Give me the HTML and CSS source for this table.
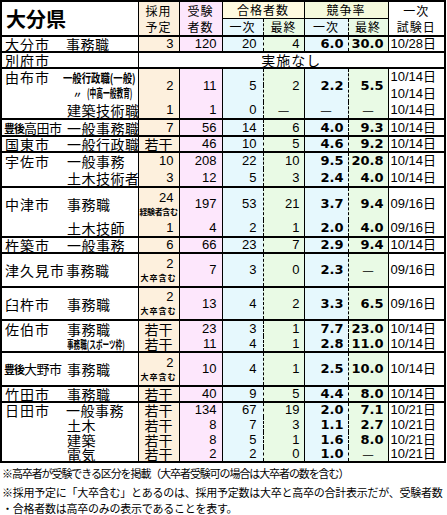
FILE: index.html
```html
<!DOCTYPE html>
<html lang="ja">
<head>
<meta charset="utf-8">
<title>大分県</title>
<link rel="stylesheet" href="styles.css">
</head>
<body>
<table class="tbl">
<colgroup>
<col class="w-city"><col class="w-job"><col class="w-plan"><col class="w-app"><col class="w-p1"><col class="w-pf"><col class="w-r1"><col class="w-rf"><col class="w-date">
</colgroup>
<thead>
<tr class="hr1">
<th colspan="2" rowspan="2" class="pref">大分県</th>
<th rowspan="2" class="c-plan hd"><span class="ln">採用</span><span class="ln">予定</span></th>
<th rowspan="2" class="c-app hd"><span class="ln">受験</span><span class="ln">者数</span></th>
<th colspan="2" class="c-p1 hd hd-pass">合格者数</th>
<th colspan="2" class="c-r1 hd hd-ratio">競争率</th>
<th rowspan="2" class="c-date hd"><span class="ln">一次</span><span class="ln">試験日</span></th>
</tr>
<tr class="hr2">
<th class="c-p1 hd">一次</th><th class="c-pf hd">最終</th><th class="c-r1 hd">一次</th><th class="c-rf hd">最終</th>
</tr>
</thead>

<tbody class="grp">
<tr class="h15">
<td class="city">大分市</td><td class="job j-tight">事務職</td><td class="c-plan num">3</td><td class="c-app num">120</td><td class="c-p1 num">20</td><td class="c-pf num">4</td><td class="c-r1 rt">6.0</td><td class="c-rf rt">30.0</td><td class="c-date dt">10/28日</td>
</tr>
</tbody>

<tbody class="grp">
<tr class="h16">
<td class="city">別府市</td><td class="job"></td><td colspan="7" class="none">実施なし</td>
</tr>
</tbody>

<tbody class="grp">
<tr class="h17">
<td class="city">由布市</td><td class="job"><span class="sq sq-a">一般行政職(一般)</span></td><td rowspan="2" class="c-plan num">2</td><td rowspan="2" class="c-app num">11</td><td rowspan="2" class="c-p1 num">5</td><td rowspan="2" class="c-pf num">2</td><td rowspan="2" class="c-r1 rt">2.2</td><td rowspan="2" class="c-rf rt">5.5</td><td class="c-date dt">10/14日</td>
</tr>
<tr class="h16">
<td class="city"></td><td class="job"><span class="ditto">〃</span><span class="sq sq-b">(中高一般教育)</span></td><td class="c-date dt">10/14日</td>
</tr>
<tr class="h17">
<td class="city"></td><td class="job j-in">建築技術職</td><td class="c-plan num">1</td><td class="c-app num">1</td><td class="c-p1 num">0</td><td class="c-pf dash">—</td><td class="c-r1 dash">—</td><td class="c-rf dash">—</td><td class="c-date dt">10/14日</td>
</tr>
</tbody>

<tbody class="grp">
<tr class="h17">
<td class="city city-sm"><span class="small-pre">豊後</span>高田市</td><td class="job j-in">一般事務職</td><td class="c-plan num">7</td><td class="c-app num">56</td><td class="c-p1 num">14</td><td class="c-pf num">6</td><td class="c-r1 rt">4.0</td><td class="c-rf rt">9.3</td><td class="c-date dt">10/14日</td>
</tr>
</tbody>

<tbody class="grp">
<tr class="h16">
<td class="city">国東市</td><td class="job j-in">一般行政職</td><td class="c-plan ctr">若干</td><td class="c-app num">46</td><td class="c-p1 num">10</td><td class="c-pf num">5</td><td class="c-r1 rt">4.6</td><td class="c-rf rt">9.2</td><td class="c-date dt">10/14日</td>
</tr>
</tbody>

<tbody class="grp">
<tr class="h17">
<td class="city">宇佐市</td><td class="job j-in">一般事務</td><td class="c-plan num">10</td><td class="c-app num">208</td><td class="c-p1 num">22</td><td class="c-pf num">10</td><td class="c-r1 rt">9.5</td><td class="c-rf rt">20.8</td><td class="c-date dt">10/14日</td>
</tr>
<tr class="h18">
<td class="city"></td><td class="job j-in">土木技術者</td><td class="c-plan num">3</td><td class="c-app num">12</td><td class="c-p1 num">5</td><td class="c-pf num">3</td><td class="c-r1 rt">2.4</td><td class="c-rf rt">4.0</td><td class="c-date dt">10/14日</td>
</tr>
</tbody>

<tbody class="grp">
<tr class="h33">
<td class="city">中津市</td><td class="job j-in">事務職</td><td class="c-plan two"><span class="two-num">24</span><span class="two-note">経験者含む</span></td><td class="c-app num">197</td><td class="c-p1 num">53</td><td class="c-pf num">21</td><td class="c-r1 rt">3.7</td><td class="c-rf rt">9.4</td><td class="c-date dt">09/16日</td>
</tr>
<tr class="h17">
<td class="city"></td><td class="job j-in">土木技師</td><td class="c-plan num">1</td><td class="c-app num">4</td><td class="c-p1 num">2</td><td class="c-pf num">1</td><td class="c-r1 rt">2.0</td><td class="c-rf rt">4.0</td><td class="c-date dt">09/16日</td>
</tr>
</tbody>

<tbody class="grp">
<tr class="h16">
<td class="city">杵築市</td><td class="job j-in">一般事務</td><td class="c-plan num">6</td><td class="c-app num">66</td><td class="c-p1 num">23</td><td class="c-pf num">7</td><td class="c-r1 rt">2.9</td><td class="c-rf rt">9.4</td><td class="c-date dt">10/14日</td>
</tr>
</tbody>

<tbody class="grp">
<tr class="h34">
<td class="city">津久見市</td><td class="job j-tight">事務職</td><td class="c-plan two"><span class="two-num">2</span><span class="two-note wide">大卒含む</span></td><td class="c-app num">7</td><td class="c-p1 num">3</td><td class="c-pf num">0</td><td class="c-r1 rt">2.3</td><td class="c-rf dash">—</td><td class="c-date dt">09/16日</td>
</tr>
</tbody>

<tbody class="grp">
<tr class="h33">
<td class="city">臼杵市</td><td class="job j-in">事務職</td><td class="c-plan two"><span class="two-num">2</span><span class="two-note wide">大卒含む</span></td><td class="c-app num">13</td><td class="c-p1 num">4</td><td class="c-pf num">2</td><td class="c-r1 rt">3.3</td><td class="c-rf rt">6.5</td><td class="c-date dt">09/16日</td>
</tr>
</tbody>

<tbody class="grp">
<tr class="h16">
<td class="city">佐伯市</td><td class="job j-in">事務職</td><td class="c-plan ctr">若干</td><td class="c-app num">23</td><td class="c-p1 num">3</td><td class="c-pf num">1</td><td class="c-r1 rt">7.7</td><td class="c-rf rt">23.0</td><td class="c-date dt">10/14日</td>
</tr>
<tr class="h16">
<td class="city"></td><td class="job j-in"><span class="sq sq-c">事務職(スポーツ枠)</span></td><td class="c-plan ctr">若干</td><td class="c-app num">11</td><td class="c-p1 num">4</td><td class="c-pf num">1</td><td class="c-r1 rt">2.8</td><td class="c-rf rt">11.0</td><td class="c-date dt">10/14日</td>
</tr>
</tbody>

<tbody class="grp">
<tr class="h34">
<td class="city city-sm"><span class="small-pre">豊後</span>大野市</td><td class="job j-in">事務職</td><td class="c-plan two"><span class="two-num">2</span><span class="two-note wide">大卒含む</span></td><td class="c-app num">10</td><td class="c-p1 num">4</td><td class="c-pf num">1</td><td class="c-r1 rt">2.5</td><td class="c-rf rt">10.0</td><td class="c-date dt">10/14日</td>
</tr>
</tbody>

<tbody class="grp">
<tr class="h16">
<td class="city">竹田市</td><td class="job j-in">事務職</td><td class="c-plan ctr">若干</td><td class="c-app num">40</td><td class="c-p1 num">9</td><td class="c-pf num">5</td><td class="c-r1 rt">4.4</td><td class="c-rf rt">8.0</td><td class="c-date dt">10/14日</td>
</tr>
</tbody>

<tbody class="grp">
<tr class="h15">
<td class="city">日田市</td><td class="job j-tight">一般事務</td><td class="c-plan ctr">若干</td><td class="c-app num">134</td><td class="c-p1 num">67</td><td class="c-pf num">19</td><td class="c-r1 rt">2.0</td><td class="c-rf rt">7.1</td><td class="c-date dt">10/21日</td>
</tr>
<tr class="h15">
<td class="city"></td><td class="job j-in">土木</td><td class="c-plan ctr">若干</td><td class="c-app num">8</td><td class="c-p1 num">7</td><td class="c-pf num">3</td><td class="c-r1 rt">1.1</td><td class="c-rf rt">2.7</td><td class="c-date dt">10/21日</td>
</tr>
<tr class="h15">
<td class="city"></td><td class="job j-in">建築</td><td class="c-plan ctr">若干</td><td class="c-app num">8</td><td class="c-p1 num">5</td><td class="c-pf num">1</td><td class="c-r1 rt">1.6</td><td class="c-rf rt">8.0</td><td class="c-date dt">10/21日</td>
</tr>
<tr class="h15">
<td class="city"></td><td class="job j-in">電気</td><td class="c-plan ctr">若干</td><td class="c-app num">2</td><td class="c-p1 num">2</td><td class="c-pf num">0</td><td class="c-r1 rt">1.0</td><td class="c-rf dash">—</td><td class="c-date dt">10/21日</td>
</tr>
</tbody>
</table>

<div class="notes">
<p class="note n1">※高卒者が受験できる区分を掲載（大卒者受験可の場合は大卒者の数を含む）</p>
<p class="note n2"><span class="nl">※採用予定に「大卒含む」とあるのは、採用予定数は大卒と高卒の合計表示だが、受験者数</span><span class="nl">・合格者数は高卒のみの表示であることを表す。</span></p>
</div>
</body>
</html>
```

FILE: styles.css
```css
html, body {
  margin: 0;
  padding: 0;
  background: #ffffff;
}
body {
  width: 447px;
  font-family: "Noto Sans CJK JP", sans-serif;
  color: #000;
}

.tbl {
  border-collapse: collapse;
  table-layout: fixed;
  width: 446px;
  border: 2px solid #000;
}
.w-city { width: 65px; }
.w-job { width: 72px; }
.w-plan { width: 41px; }
.w-app { width: 43px; }
.w-p1 { width: 41px; }
.w-pf { width: 41px; }
.w-r1 { width: 44px; }
.w-rf { width: 40px; }
.w-date { width: 57px; }

.tbl th, .tbl td {
  padding: 0;
  font-weight: normal;
  font-size: 13px;
  line-height: 14px;
  white-space: nowrap;
  vertical-align: middle;
}

/* column colours and rules */
.c-plan { background: #fdf0dd; border-left: 1px solid #000; }
.c-app { background: #fde7fc; border-left: 1px solid #000; }
.c-p1 { background: #e6f8fd; border-left: 1px solid #000; }
.c-pf { background: #e9fae5; border-left: 1px dashed #000; }
.c-r1 { background: #e6f8fd; border-left: 1px solid #000; }
.c-rf { background: #e9fae5; border-left: 1px dashed #000; }
.c-date { background: #ffffff; border-left: 1px solid #000; }

/* header */
.hr1 { height: 17px; }
.hr2 { height: 17px; }
.tbl th.pref {
  text-align: left;
  padding-left: 4px;
  font-size: 20px;
  line-height: 24px;
  font-weight: bold;
  background: #fff;
}
.tbl th.hd {
  text-align: center;
  font-size: 12px;
  line-height: 16px;
  letter-spacing: 1px;
}
.ln { display: block; line-height: 16px; }
.hd-pass { background: #fffbe0; border-bottom: 1px solid #000; }
.hd-ratio { background: #f5fadd; border-bottom: 1px solid #000; }

/* groups */
.grp > tr:first-child > td { border-top: 2px solid #000; }

.h15 { height: 15px; }
.h16 { height: 16px; }
.h17 { height: 17px; }
.h18 { height: 18px; }
.h33 { height: 33px; }
.h34 { height: 34px; }

.tbl td.city {
  padding-left: 3px;
  font-size: 14px;
  letter-spacing: 1px;
  text-align: left;
}
.tbl td.city-sm {
  padding-left: 2px;
  font-size: 13px;
  letter-spacing: -0.5px;
}
.small-pre {
  font-size: 11px;
  letter-spacing: -1px;
  font-weight: bold;
}
.tbl td.job {
  text-align: left;
  font-size: 14px;
  letter-spacing: 0.5px;
}
.tbl td.j-in { padding-left: 1px; }
.tbl td.j-tight { padding-left: 0; }

.sq {
  display: inline-block;
  font-size: 12px;
  font-weight: bold;
  transform-origin: left center;
  letter-spacing: 0;
}
.sq-a { transform: scaleX(0.78); margin-left: -3px; }
.sq-b { transform: scaleX(0.56); margin-left: 4px; }
.sq-c { transform: scaleX(0.6); font-size: 11px; }
.ditto {
  display: inline-block;
  font-size: 9px;
  font-weight: bold;
  margin-left: 7px;
}

.tbl td.num {
  text-align: right;
  padding-right: 5px;
  font-family: "Liberation Sans", sans-serif;
  font-size: 13px;
}
.tbl td.c-p1.num { padding-right: 6px; }
.tbl td.c-pf.num { padding-right: 4px; }
.tbl td.rt {
  text-align: right;
  padding-right: 4px;
  font-family: "DejaVu Sans", sans-serif;
  font-weight: bold;
  font-size: 13px;
}
.tbl td.ctr { text-align: center; font-size: 14px; }
.tbl td.dash { text-align: center; font-size: 13px; }
.tbl td.dt {
  text-align: left;
  padding-left: 2px;
  font-family: "Liberation Sans", "Noto Sans CJK JP", sans-serif;
  font-size: 13px;
}
.tbl td.none {
  text-align: center;
  background: #fff;
  border-left: 1px solid #000;
  font-size: 14px;
  letter-spacing: 1px;
}

.tbl td.two { text-align: right; }
.two-num {
  display: block;
  text-align: right;
  padding-right: 5px;
  font-family: "Liberation Sans", sans-serif;
  font-size: 13px;
  line-height: 15px;
}
.two-note {
  display: block;
  text-align: center;
  font-size: 8px;
  line-height: 14px;
  font-weight: bold;
  letter-spacing: -0.4px;
}
.two-note.wide { letter-spacing: 1px; }

/* notes */
.notes {
  padding-left: 2px;
}
.note {
  margin: 0;
  font-size: 11px;
  white-space: nowrap;
}
.n1 { line-height: 20px; letter-spacing: -1.1px; }
.n2 { margin-top: 1px; letter-spacing: -0.25px; }
.nl { display: block; line-height: 16px; }
```
